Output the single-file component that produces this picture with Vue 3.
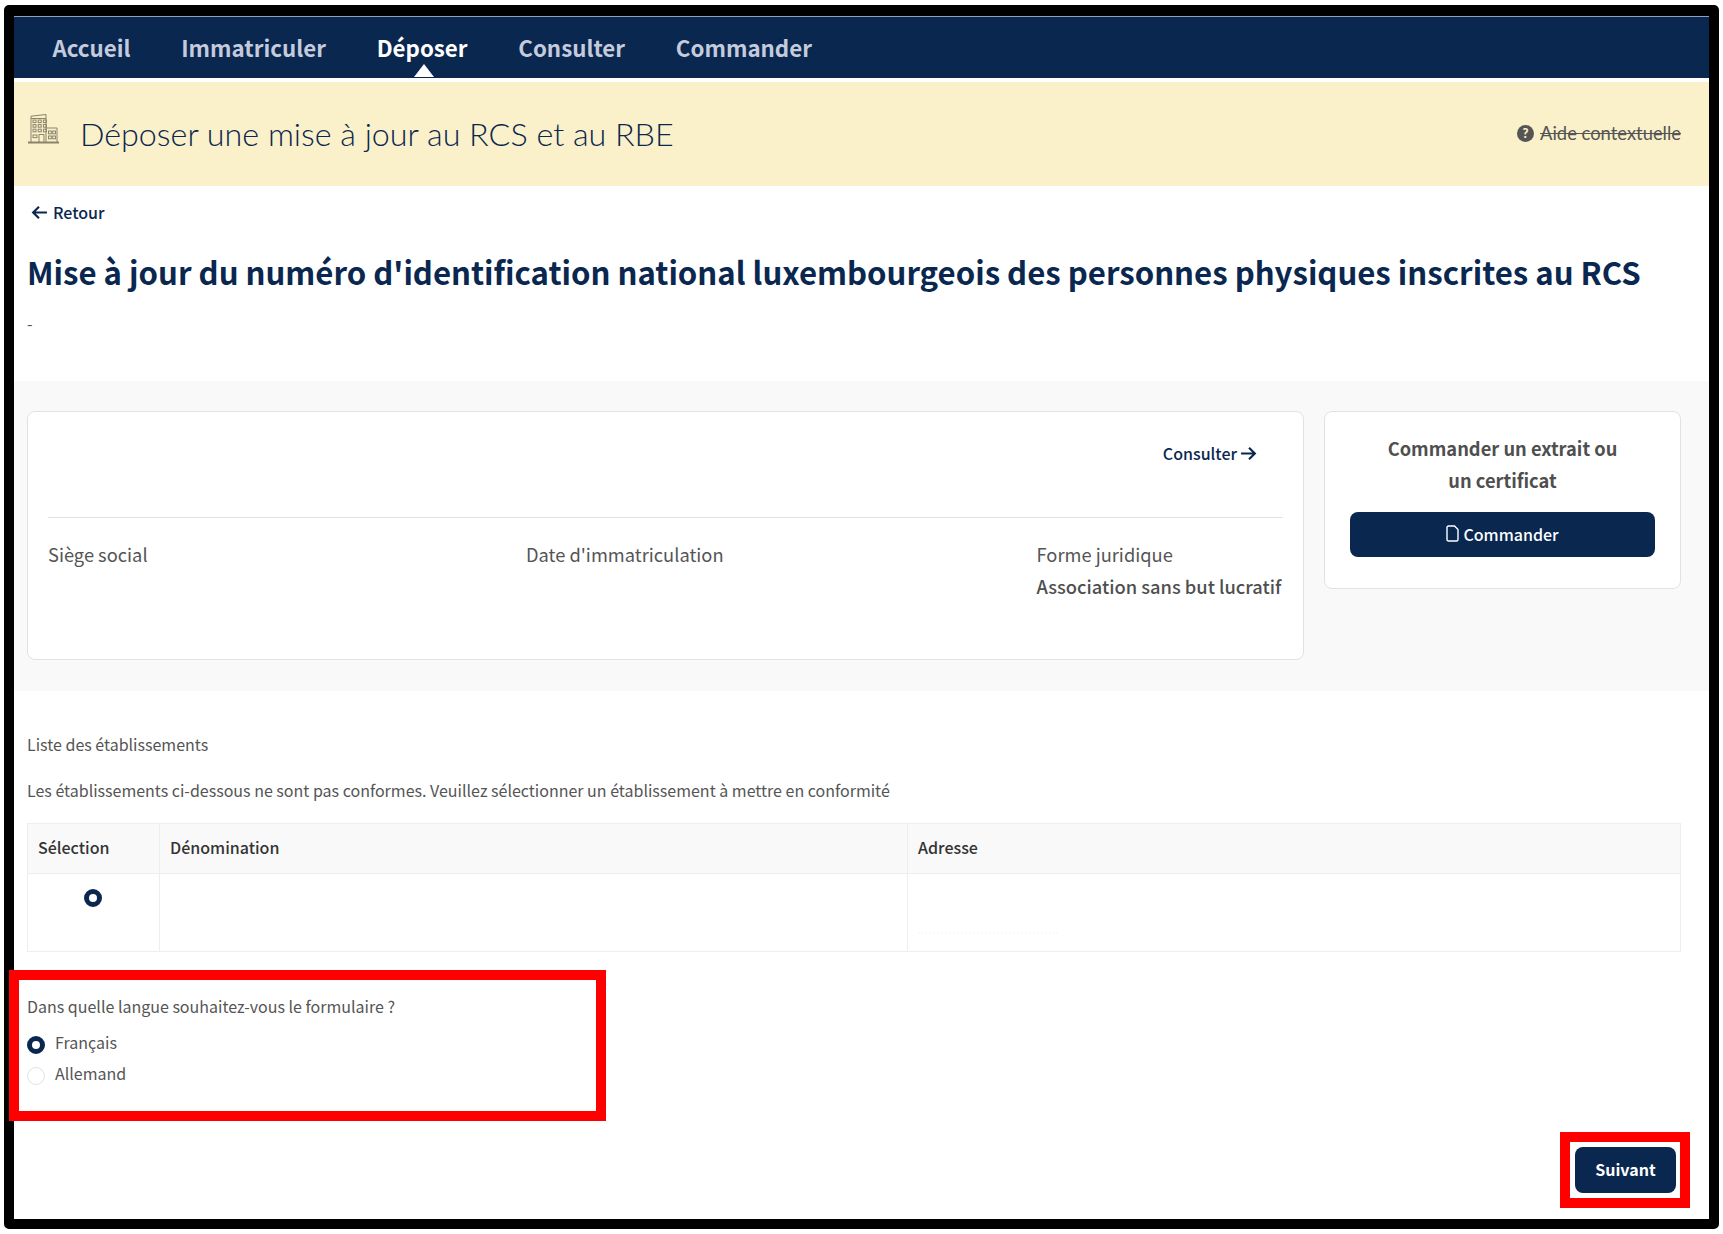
<script setup>
const navItems = [
  { label: 'Accueil' },
  { label: 'Immatriculer' },
  { label: 'Déposer', active: true },
  { label: 'Consulter' },
  { label: 'Commander' },
]
const windows = []
for (let r = 0; r < 4; r++) for (let c = 0; c < 3; c++) windows.push({ x: 6 + c * 5.2, y: 7 + r * 4.6 })
</script>

<template>
  <div class="page">
    <div class="shot">
      <nav class="nav">
        <a v-for="item in navItems" :key="item.label" class="nav-item" :class="{ active: item.active }">{{ item.label }}</a>
      </nav>

      <header class="banner">
        <div class="banner-left">
          <svg class="building" viewBox="0 0 33 31" fill="none" stroke="#8b836c" stroke-width="1">
            <path d="M4 29V3.200L19 1.500V29" />
            <path d="M4 5.500H19" />
            <path d="M19 15H30V29" />
            <path d="M1 29.500H32" stroke-width="2" />
            <rect v-for="(w, i) in windows.slice(0, 9)" :key="i" :x="w.x" :y="w.y" width="3" height="2.600" />
            <rect x="6" y="22" width="4" height="2.600" />
            <path d="M12 29V21.500H17V29" />
            <rect x="21.500" y="18" width="2.800" height="2.800" /><rect x="25.700" y="18" width="2.800" height="2.800" />
            <rect x="21.500" y="23" width="2.800" height="2.800" /><rect x="25.700" y="23" width="2.800" height="2.800" />
          </svg>
          <span class="banner-title">Déposer une mise à jour au RCS et au RBE</span>
        </div>
        <div class="help">
          <span class="help-icon">?</span>
          <span class="help-text">Aide contextuelle</span>
        </div>
      </header>

      <a class="back">
        <svg class="arrow" viewBox="0 0 16 14" fill="none" stroke="currentColor" stroke-width="2">
          <path d="M15 7H2M7.500 1.500 2 7l5.500 5.500" />
        </svg>
        Retour
      </a>
      <h1 class="title">Mise à jour du numéro d'identification national luxembourgeois des personnes physiques inscrites au RCS</h1>
      <p class="dash">-</p>

      <section class="summary">
        <div class="card info">
          <div class="info-top">
            <a class="consult">Consulter
              <svg class="arrow" viewBox="0 0 16 14" fill="none" stroke="currentColor" stroke-width="2">
                <path d="M1 7h13M8.500 1.500 14 7l-5.500 5.500" />
              </svg>
            </a>
          </div>
          <div class="info-grid">
            <div>Siège social</div>
            <div>Date d'immatriculation</div>
            <div>
              <div>Forme juridique</div>
              <div class="strong">Association sans but lucratif</div>
            </div>
          </div>
        </div>
        <div class="card order">
          <div class="order-title">Commander un extrait ou<br />un certificat</div>
          <button class="btn btn-wide" type="button">
            <svg class="doc" viewBox="0 0 13 17" fill="none" stroke="currentColor" stroke-width="1.400">
              <path d="M1 2.500C1 1.600 1.600 1 2.500 1H8.500L12 4.500V14.500C12 15.400 11.400 16 10.500 16H2.500C1.600 16 1 15.400 1 14.500Z" />
            </svg>
            <span class="btn-label">Commander</span>
          </button>
        </div>
      </section>

      <p class="list-title">Liste des établissements</p>
      <p class="list-note">Les établissements ci-dessous ne sont pas conformes. Veuillez sélectionner un établissement à mettre en conformité</p>

      <table class="table">
        <colgroup>
          <col class="col-a" /><col class="col-b" /><col />
        </colgroup>
        <thead>
          <tr><th>Sélection</th><th>Dénomination</th><th>Adresse</th></tr>
        </thead>
        <tbody>
          <tr>
            <td class="cell-radio"><span class="radio on"></span></td>
            <td></td>
            <td class="cell-address"><span class="faint"></span></td>
          </tr>
        </tbody>
      </table>

      <p class="question">Dans quelle langue souhaitez-vous le formulaire ?</p>
      <div class="choice first"><span class="radio on"></span><span>Français</span></div>
      <div class="choice"><span class="radio"></span><span>Allemand</span></div>

      <div class="actions">
        <button class="btn btn-next" type="button"><span class="btn-label">Suivant</span></button>
      </div>

      <div class="mark mark-lang"></div>
      <div class="mark mark-next"></div>
    </div>
  </div>
</template>

<style>
html, body { margin: 0; background: #fff; }
</style>

<style scoped>
.page {
  width: 1723px;
  height: 1234px;
  box-sizing: border-box;
  padding: 5px 4px 5px 4px;
  overflow: hidden;
  background: #fff;
  font-family: "Noto Sans CJK SC", "Noto Sans", sans-serif;
  color: #555;
  font-size: 16px;
  line-height: 24px;
}
.shot {
  position: relative;
  box-sizing: border-box;
  width: 1715px;
  height: 1224px;
  border: solid #000;
  border-width: 11px 10px 10px 10px;
  border-radius: 5px;
  background: #fff;
}
.nav {
  height: 62px;
  box-sizing: border-box;
  display: flex;
  align-items: center;
  padding: 0 0 2px 13px;
  background: #0a2750;
  border-top: 1px solid #8fa0bb;
}
.nav-item {
  position: relative;
  padding: 0 25.400px;
  color: #c3cbdd;
  font-size: 22.300px;
  font-weight: 700;
  line-height: 32px;
  white-space: nowrap;
}
.nav-item.active {
  color: #fff;
}
.nav-item.active::after {
  content: "";
  position: absolute;
  left: 50%;
  bottom: -14px;
  margin-left: -8px;
  border: solid transparent;
  border-width: 0 10px 13px;
  border-bottom-color: #fff;
}
.banner {
  margin-top: 4px;
  height: 104px;
  display: flex;
  align-items: center;
  justify-content: space-between;
  padding: 0 28px 0 13px;
  background: #faf0c9;
}
.banner-left {
  display: flex;
  align-items: center;
  gap: 20px;
}
.building {
  width: 33px;
  height: 33px;
  margin-top: -12px;
}
.banner-title {
  font-family: Lato, "Open Sans", sans-serif;
  font-weight: 300;
  font-size: 32.250px;
  line-height: 40px;
  color: #0a2750;
}
.help {
  display: flex;
  align-items: center;
  gap: 6px;
  font-family: Lato, "Open Sans", sans-serif;
  font-size: 18.400px;
  color: #555;
  margin-top: -2px;
}
.help-icon {
  width: 17px;
  height: 17px;
  border-radius: 50%;
  background: #555;
  color: #faf0c9;
  display: flex;
  align-items: center;
  justify-content: center;
  font-size: 13px;
  font-weight: 900;
  line-height: 1;
}
.help-text {
  text-decoration: line-through;
}
.back {
  display: flex;
  align-items: center;
  gap: 5px;
  margin: 14px 0 0 17px;
  color: #0a2750;
  font-size: 16px;
  font-weight: 500;
}
.arrow {
  width: 17px;
  height: 15px;
}
.title {
  margin: 26px 0 0 13px;
  color: #0a2750;
  font-size: 31.150px;
  font-weight: 700;
  line-height: 44px;
  white-space: nowrap;
}
.dash {
  margin: 17px 0 0 13px;
}
.summary {
  margin-top: 46px;
  display: flex;
  align-items: flex-start;
  gap: 20px;
  padding: 30px 25px 31px 13px;
  background: #f9f9f9;
}
.card {
  box-sizing: border-box;
  background: #fff;
  border: 1px solid #e2e2e2;
  border-radius: 8px;
}
.info {
  width: 1277px;
  height: 249px;
  padding: 0 20px;
}
.info-top {
  height: 106px;
  display: flex;
  justify-content: flex-end;
  padding: 30px 26px 0 0;
  border-bottom: 1px solid #e2e2e2;
  box-sizing: border-box;
}
.consult {
  display: flex;
  align-items: center;
  gap: 3px;
  height: 24px;
  margin-top: -1px;
  color: #0a2750;
  font-size: 16px;
  font-weight: 500;
}
.info-grid {
  display: grid;
  grid-template-columns: 478px 510.500px 1fr;
  margin-top: 20px;
  font-size: 18.300px;
  line-height: 32px;
  white-space: nowrap;
}
.strong {
  font-weight: 500;
  color: #4f4f4f;
}
.order {
  width: 357px;
  height: 178px;
  padding: 20px 25px 0;
  text-align: center;
}
.order-title {
  font-size: 18.300px;
  line-height: 32px;
  font-weight: 700;
  color: #4f4f4f;
}
.btn {
  display: flex;
  align-items: center;
  justify-content: center;
  gap: 4px;
  border: 0;
  background: #0a2750;
  color: #fff;
  font: inherit;
  font-size: 16px;
  font-weight: 500;
  border-radius: 8px;
  padding: 0;
}
.btn-wide {
  width: 305px;
  height: 45px;
  margin-top: 16px;
}
.btn-label {
  margin-top: -2px;
}
.doc {
  width: 13px;
  height: 17px;
  margin-top: -3px;
}
.list-title {
  margin: 41px 0 0 13px;
}
.list-note {
  margin: 22px 0 0 13px;
}
.table {
  margin: 21px 0 0 13px;
  width: 1654px;
  border-collapse: collapse;
  table-layout: fixed;
}
.col-a { width: 132px; }
.col-b { width: 748px; }
.table th,
.table td {
  border: 1px solid #eee;
  padding: 0 10px;
  text-align: left;
  box-sizing: border-box;
}
.table th {
  height: 50px;
  background: #f9f9f9;
  color: #333;
  font-size: 16px;
  font-weight: 500;
  padding-bottom: 4px;
}
.table td {
  height: 78px;
  vertical-align: top;
}
.cell-radio {
  padding: 15px 11px 0 10px !important;
}
.cell-address {
  padding-top: 58px !important;
}
.faint {
  display: block;
  width: 140px;
  border-top: 2px dotted #fafafa;
}
.radio {
  display: inline-block;
  box-sizing: border-box;
  width: 18px;
  height: 18px;
  border: 1px solid #e2e2e2;
  border-radius: 50%;
  background: #fff;
}
.radio.on {
  border: 5px solid #0a2750;
}
.cell-radio .radio {
  display: block;
  margin: 0 auto;
}
.question {
  margin: 42px 0 0 13px;
}
.choice {
  height: 31px;
  margin-left: 13px;
  display: flex;
  align-items: center;
  gap: 10px;
}
.choice > span:last-child {
  margin-top: -5px;
}
.choice.first {
  margin-top: 11px;
}
.actions {
  display: flex;
  justify-content: flex-end;
  margin: 56px 33px 0 0;
}
.btn-next {
  width: 101px;
  height: 46px;
  font-weight: 700;
}
.mark {
  position: absolute;
  box-sizing: border-box;
  border: 10px solid #f00;
}
.mark-lang {
  left: -5px;
  top: 954px;
  width: 597px;
  height: 151px;
}
.mark-next {
  left: 1546px;
  top: 1116px;
  width: 130px;
  height: 76px;
}
</style>
